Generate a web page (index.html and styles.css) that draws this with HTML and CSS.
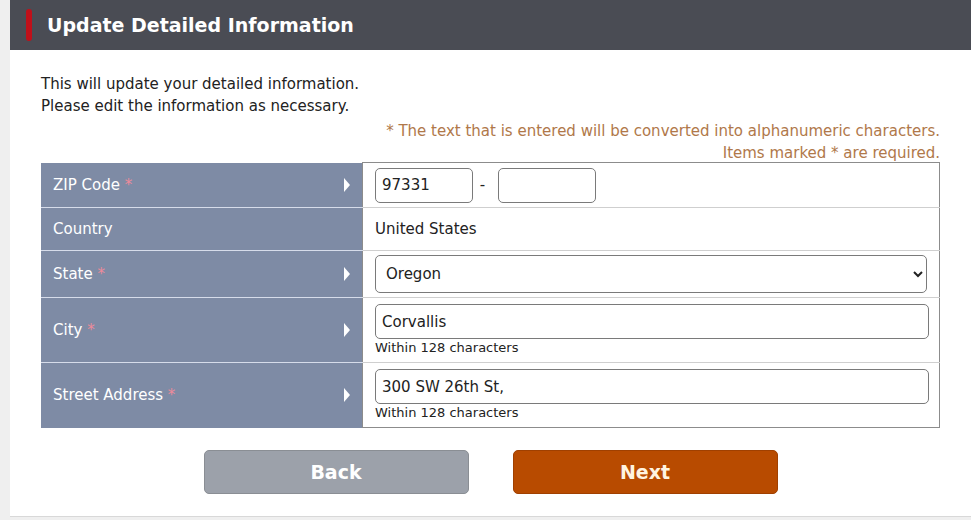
FILE: index.html
```html
<!DOCTYPE html>
<html lang="en">
<head>
  <meta charset="UTF-8">
  <title>Update Detailed Information</title>
  <link rel="stylesheet" href="styles.css">
</head>
<body>

  <div class="panel">
    <h2 class="panel-title"><span class="mark"></span>Update Detailed Information</h2>

    <div class="panel-body">
      <p class="intro">This will update your detailed information.<br>Please edit the information as necessary.</p>

      <p class="notes">* The text that is entered will be converted into alphanumeric characters.<br>Items marked * are required.</p>

      <table class="form-table">
        <tr class="row-zip">
          <th><span>ZIP Code <em>*</em></span><i class="arrow"></i></th>
          <td>
            <input type="text" class="zip" value="97331">
            <span class="dash">-</span>
            <input type="text" class="zip" value="">
          </td>
        </tr>
        <tr class="row-country">
          <th><span>Country</span></th>
          <td>United States</td>
        </tr>
        <tr class="row-state">
          <th><span>State <em>*</em></span><i class="arrow"></i></th>
          <td>
            <select class="wide">
              <option>Oregon</option>
            </select>
          </td>
        </tr>
        <tr class="row-text">
          <th><span>City <em>*</em></span><i class="arrow"></i></th>
          <td>
            <input type="text" class="wide" value="Corvallis">
            <small>Within 128 characters</small>
          </td>
        </tr>
        <tr class="row-text">
          <th><span>Street Address <em>*</em></span><i class="arrow"></i></th>
          <td>
            <input type="text" class="wide" value="300 SW 26th St,">
            <small>Within 128 characters</small>
          </td>
        </tr>
      </table>

      <div class="buttons">
        <button class="btn btn-back">Back</button>
        <button class="btn btn-next">Next</button>
      </div>
    </div>
  </div>

</body>
</html>
```

FILE: styles.css
```css
html, body {
  margin: 0;
  padding: 0;
}

body {
  font-family: "DejaVu Sans", Verdana, sans-serif;
  background: #efefef;
  color: #222;
  width: 971px;
  height: 520px;
  overflow: hidden;
}

.panel {
  margin-left: 10px;
  background: white;
  height: 516px;
  border-bottom: 1px solid #d8d8d8;
}

.panel-title {
  margin: 0;
  height: 50px;
  background: #4a4c54;
  color: white;
  font-size: 19px;
  font-weight: bold;
  display: flex;
  align-items: center;
  padding-left: 16px;
}

.mark {
  width: 6px;
  height: 32px;
  background: #c0101a;
  border-radius: 3px;
  margin-right: 15px;
}

.panel-body {
  padding: 20px 31px 0 31px;
}

.intro {
  margin: 0;
  font-size: 15px;
  line-height: 22px;
  padding-top: 3px;
}

.notes {
  margin: 3px 0 0 0;
  text-align: right;
  font-size: 15px;
  line-height: 22px;
  color: #b0784a;
}

.form-table {
  width: 899px;
  border-collapse: collapse;
  margin-top: -2px;
  font-size: 15px;
}

.form-table th {
  width: 325px;
  box-sizing: border-box;
  background: #7e8ba5;
  color: white;
  font-weight: normal;
  text-align: left;
  padding: 0 12px;
  border-bottom: 1px solid #d6dcea;
  position: relative;
}

.form-table tr:last-child th {
  border-bottom: none;
}

.form-table th em {
  font-style: normal;
  color: #ec8a9a;
}

.arrow {
  position: absolute;
  right: 12px;
  top: 50%;
  margin-top: -7px;
  width: 0;
  height: 0;
  border-left: 6px solid white;
  border-top: 7px solid transparent;
  border-bottom: 7px solid transparent;
}

.form-table td {
  padding: 0 10px 0 12px;
  border: 1px solid #8c8c8c;
  border-top: 1px solid #cfcfcf;
  border-bottom: 1px solid #cfcfcf;
}

.form-table tr:first-child td {
  border-top: 1px solid #8c8c8c;
}

.form-table tr:last-child td {
  border-bottom: 1px solid #8c8c8c;
}

.row-zip th, .row-zip td {
  height: 44px;
}

.row-country th, .row-country td {
  height: 42px;
}

.row-state th, .row-state td {
  height: 46px;
}

.row-text th, .row-text td {
  height: 64px;
}

input, select {
  font-family: "DejaVu Sans", Verdana, sans-serif;
  font-size: 15px;
  color: #222;
  border: 1px solid #7a7a7a;
  border-radius: 5px;
  box-sizing: border-box;
  background: white;
  padding: 0 6px;
  margin: 0;
}

input.zip {
  width: 98px;
  height: 35px;
  vertical-align: middle;
}

.dash {
  display: inline-block;
  margin: 0 8px 0 2px;
  vertical-align: middle;
}

select.wide {
  width: 552px;
  height: 38px;
  display: block;
  padding-left: 6px;
}

input.wide {
  width: 554px;
  height: 35px;
  display: block;
  margin-top: 5px;
}

.form-table small {
  display: block;
  font-size: 13px;
  margin-top: 1px;
  margin-bottom: 6px;
}

.buttons {
  display: flex;
  justify-content: center;
  gap: 44px;
  margin-top: 22px;
}

.btn {
  width: 265px;
  height: 44px;
  border: 1px solid #8a8e94;
  border-radius: 5px;
  color: white;
  font-family: "DejaVu Sans", Verdana, sans-serif;
  font-size: 19px;
  font-weight: bold;
  cursor: pointer;
}

.btn-back {
  background: #9ca1aa;
}

.btn-next {
  background: #b84b00;
  border-color: #a04000;
  color: #fff4e0;
}
```
